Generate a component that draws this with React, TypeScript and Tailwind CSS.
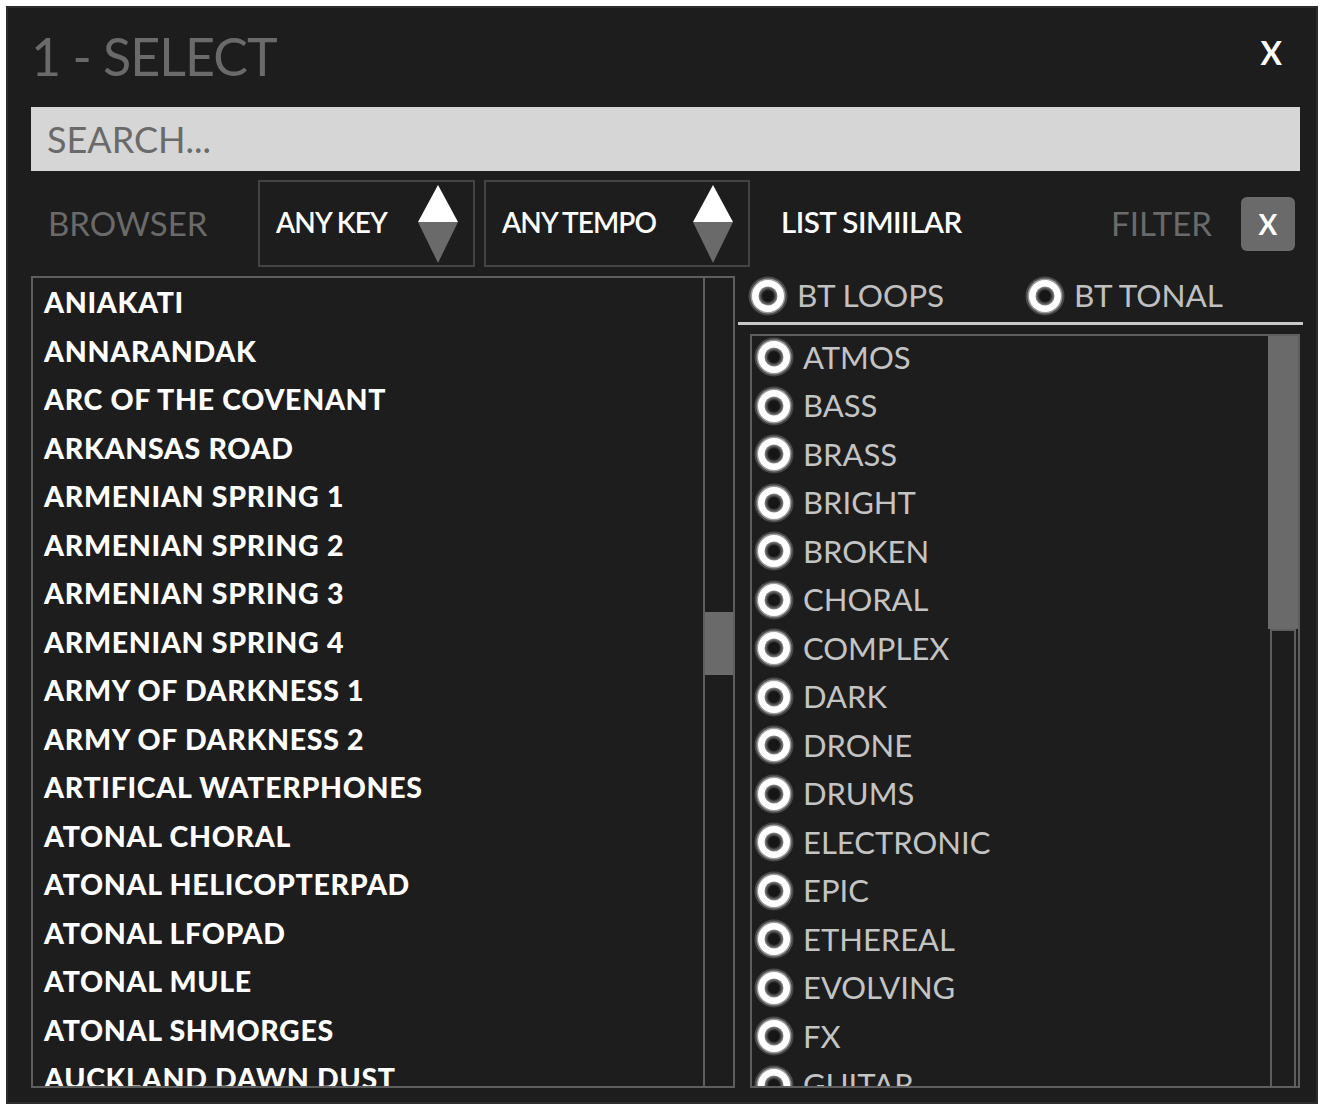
import React from "react";

const presets = [
  "ANIAKATI",
  "ANNARANDAK",
  "ARC OF THE COVENANT",
  "ARKANSAS ROAD",
  "ARMENIAN SPRING 1",
  "ARMENIAN SPRING 2",
  "ARMENIAN SPRING 3",
  "ARMENIAN SPRING 4",
  "ARMY OF DARKNESS 1",
  "ARMY OF DARKNESS 2",
  "ARTIFICAL WATERPHONES",
  "ATONAL CHORAL",
  "ATONAL HELICOPTERPAD",
  "ATONAL LFOPAD",
  "ATONAL MULE",
  "ATONAL SHMORGES",
  "AUCKLAND DAWN DUST",
];

const tags = [
  "ATMOS",
  "BASS",
  "BRASS",
  "BRIGHT",
  "BROKEN",
  "CHORAL",
  "COMPLEX",
  "DARK",
  "DRONE",
  "DRUMS",
  "ELECTRONIC",
  "EPIC",
  "ETHEREAL",
  "EVOLVING",
  "FX",
  "GUITAR",
];

const font = { fontFamily: "Lato, 'Open Sans', sans-serif" };

function Radio() {
  return (
    <svg width="40" height="40" viewBox="0 0 40 40" className="shrink-0">
      <defs>
        <radialGradient id="hole" cx="50%" cy="50%" r="50%">
          <stop offset="55%" stopColor="#161616" />
          <stop offset="100%" stopColor="#8a8a8a" />
        </radialGradient>
      </defs>
      <circle cx="20" cy="20" r="19.5" fill="#4a4a4a" />
      <circle cx="20" cy="20" r="17.5" fill="#9a9a9a" />
      <circle cx="20" cy="20" r="16" fill="#ffffff" />
      <circle cx="20" cy="20" r="9.5" fill="url(#hole)" />
    </svg>
  );
}

function Spinner() {
  return (
    <svg width="40" height="78" viewBox="0 0 40 78" className="shrink-0">
      <polygon points="20,0 40,37 0,37" fill="#ffffff" />
      <polygon points="0,37 40,37 20,78" fill="#6a6a6a" />
    </svg>
  );
}

function Dropdown({ label, width }: { label: string; width: string }) {
  return (
    <div
      className={`flex h-full items-center justify-between border-2 border-[#444] pl-[16px] pr-[15px] ${width}`}
    >
      <span className="-mt-[3px] whitespace-pre text-[28px] font-semibold tracking-[-0.9px] text-white">
        {label}
      </span>
      <Spinner />
    </div>
  );
}

export default function App() {
  return (
    <div className="min-h-screen bg-white p-[6px]" style={font}>
      <div className="flex h-[1098px] w-[1312px] flex-col border-2 border-[#2c2c2c] bg-[#1d1d1d]">
        {/* title bar */}
        <header className="flex h-[99px] shrink-0 items-center justify-between pl-[23px] pr-[34px]">
          <h1 className="-mt-[3px] text-[52px] font-normal leading-none tracking-[-1px] text-[#6a6a6a]">
            1 - SELECT
          </h1>
          <span className="-mt-[9px] text-[32px] font-bold text-white">X</span>
        </header>

        <div className="flex min-h-0 flex-1 flex-col pl-[23px] pr-[16px]">
          {/* search */}
          <div className="flex h-[64px] shrink-0 items-center bg-[#d6d6d6] pl-[16px]">
            <span className="text-[36px] text-[#6a6a6a]">SEARCH...</span>
          </div>

          {/* filters row */}
          <div className="mt-[9px] flex h-[87px] shrink-0 items-center">
            <span className="w-[227px] pl-[17px] text-[33px] text-[#6a6a6a]">BROWSER</span>
            <Dropdown label="ANY KEY" width="w-[217px]" />
            <div className="w-[9px]" />
            <Dropdown label="ANY TEMPO" width="w-[266px]" />
            <span className="-mt-[3px] ml-[31px] text-[29.5px] font-semibold tracking-[-0.5px] text-white">
              LIST SIMIILAR
            </span>
            <span className="ml-auto text-[33px] text-[#6a6a6a]">FILTER</span>
            <button className="ml-[29px] mr-[5px] flex h-[54px] w-[54px] items-center justify-center rounded-[6px] bg-[#6a6a6a] text-[28px] font-bold text-white">
              X
            </button>
          </div>

          {/* browser lists */}
          <div className="mt-[9px] flex h-[812px] shrink-0">
            <div className="flex w-[704px] shrink-0 overflow-hidden border-2 border-[#5e5e5e]">
              <ul className="min-w-0 flex-1 overflow-hidden pl-[11px]">
                {presets.map((p) => (
                  <li
                    key={p}
                    className="h-[48.5px] whitespace-nowrap text-[28.5px] font-black leading-[48.5px] tracking-[0.7px] text-white"
                  >
                    {p}
                  </li>
                ))}
              </ul>
              <div className="relative w-[30px] shrink-0 border-l-2 border-[#5e5e5e]">
                <div className="absolute left-0 right-0 top-[334px] h-[63px] bg-[#6a6a6a]" />
              </div>
            </div>

            <div className="ml-[3px] flex min-w-0 flex-1 flex-col">
              <div className="-mr-[3px] flex h-[49px] shrink-0 items-center border-b-[3px] border-[#c8c8c8] pb-[6px] pl-[10px]">
                <div className="flex w-[277px] items-center gap-[9px]">
                  <Radio />
                  <span className="text-[31.5px] text-[#c0c0c0]">BT LOOPS</span>
                </div>
                <div className="flex items-center gap-[9px]">
                  <Radio />
                  <span className="text-[31.5px] text-[#c0c0c0]">BT TONAL</span>
                </div>
              </div>

              <div className="ml-[12px] mt-[9px] flex min-h-0 flex-1 overflow-hidden border-2 border-[#5e5e5e]">
                <ul className="-mt-[3px] min-w-0 flex-1 overflow-hidden pl-[2px]">
                  {tags.map((t) => (
                    <li key={t} className="flex h-[48.5px] items-center gap-[9px]">
                      <Radio />
                      <span className="text-[31px] leading-none text-[#c4c4c4]">{t}</span>
                    </li>
                  ))}
                </ul>
                <div className="flex w-[30px] shrink-0 flex-col">
                  <div className="h-[293px] bg-[#6a6a6a]" />
                  <div className="mx-[2px] flex-1 border-x-2 border-t-2 border-[#5e5e5e]" />
                </div>
              </div>
            </div>
          </div>
        </div>
      </div>
    </div>
  );
}
